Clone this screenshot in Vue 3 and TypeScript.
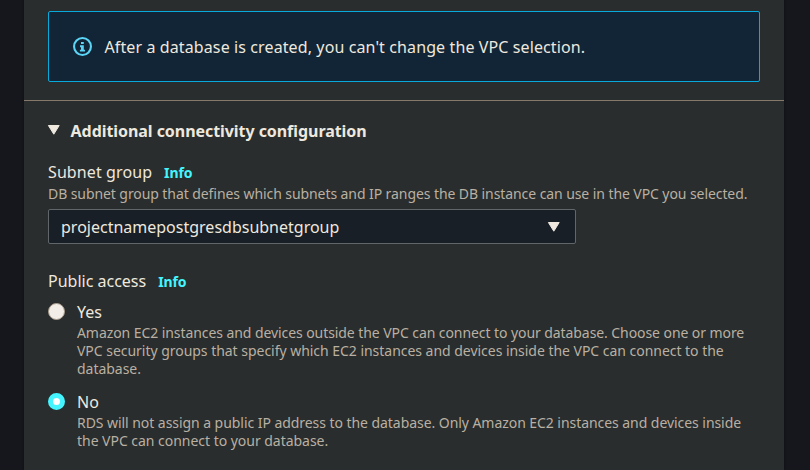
<script setup lang="ts">
import { ref } from 'vue'

interface AccessOption {
  value: string
  label: string
  lines: string[]
}

const access = ref('no')
const options: AccessOption[] = [
  {
    value: 'yes',
    label: 'Yes',
    lines: [
      'Amazon EC2 instances and devices outside the VPC can connect to your database. Choose one or more',
      'VPC security groups that specify which EC2 instances and devices inside the VPC can connect to the',
      'database.',
    ],
  },
  {
    value: 'no',
    label: 'No',
    lines: [
      'RDS will not assign a public IP address to the database. Only Amazon EC2 instances and devices inside',
      'the VPC can connect to your database.',
    ],
  },
]
</script>

<template>
  <main class="page">
    <div class="panel">
      <section class="notice-area">
        <div class="notice">
          <svg class="info-icon" width="19" height="19" viewBox="0 0 19 19">
            <circle cx="9.5" cy="9.5" r="8.45" fill="none" stroke="#5bd4f5" stroke-width="2.1" />
            <path d="M8 4.9h2.8V7H8zM7 8.3h3.8v4.4H12v1.9H6.9v-1.9H8v-2.5H7z" fill="#5bd4f5" />
          </svg>
          <span class="notice-text">After a database is created, you can't change the VPC selection.</span>
        </div>
      </section>
      <section class="config">
        <h2 class="heading">
          <svg class="caret" width="13" height="10" viewBox="0 0 13 10"><path d="M.4.5h10.8L5.8 9.2z" fill="#eee8df" stroke="#eee8df" stroke-linejoin="round" /></svg>
          <span class="heading-text">Additional connectivity configuration</span>
        </h2>
        <div class="label-row subnet-label"><span>Subnet group</span><a class="info">Info</a></div>
        <p class="desc subnet-desc">DB subnet group that defines which subnets and IP ranges the DB instance can use in the VPC you selected.</p>
        <div class="select">
          <span class="select-text">projectnamepostgresdbsubnetgroup</span>
          <svg class="caret" width="13" height="10" viewBox="0 0 13 10"><path d="M.4.5h10.8L5.8 9.2z" fill="#eee8df" stroke="#eee8df" stroke-linejoin="round" /></svg>
        </div>
        <div class="label-row public-label"><span>Public access</span><a class="info">Info</a></div>
        <div class="options">
          <div v-for="o in options" :key="o.value" class="option" :class="o.value" @click="access = o.value">
            <span class="radio" :class="{ checked: access === o.value }"></span>
            <div class="option-body">
              <div class="option-label">{{ o.label }}</div>
              <p v-for="line in o.lines" :key="line" class="desc">{{ line }}</p>
            </div>
          </div>
        </div>
      </section>
    </div>
  </main>
</template>

<style>
body {
  background: #16171c;
  overflow: hidden;
}
</style>

<style scoped>
.page {
  box-sizing: border-box;
  height: 470px;
  padding: 0 26px 0 24px;
  background: #16171c;
  font-family: 'Noto Sans', sans-serif;
  font-size: 16px;
  line-height: 22px;
  font-feature-settings: 'liga' 1;
  color: #eee8df;
  white-space: nowrap;
}
.panel {
  height: 470px;
  background: #292d2d;
  box-shadow: 0 0 2px #0b0d10;
}
.notice-area {
  box-sizing: border-box;
  height: 101px;
  padding: 11px 24px 0;
  border-bottom: 1px solid #87796a;
}
.notice {
  box-sizing: border-box;
  height: 71px;
  display: flex;
  align-items: center;
  padding: 0 24px;
  border: 1px solid #08aadc;
  border-radius: 2px;
  background: #112536;
}
.info-icon {
  margin-right: 12.5px;
}
.notice-text {
  letter-spacing: 0.11px;
}
.config {
  padding: 19px 24px 0;
}
.heading {
  display: flex;
  align-items: center;
  gap: 9.6px;
  margin: 0;
  font-size: 16px;
  line-height: 22px;
}
.heading .caret {
  margin-bottom: 2px;
}
.heading-text {
  letter-spacing: -0.06px;
}
.caret {
  flex: none;
  overflow: visible;
}
.label-row {
  display: flex;
  gap: 12px;
  height: 22px;
}
.subnet-label {
  margin-top: 19px;
  letter-spacing: 0.1px;
}
.info {
  font-size: 14px;
  font-weight: 700;
  line-height: 23px;
  letter-spacing: -0.1px;
  color: #44f5ff;
}
.public-label .info {
  line-height: 24px;
}
.desc {
  margin: 0;
  font-size: 14px;
  line-height: 18px;
  color: #b9b0a3;
}
.subnet-desc {
  margin-top: 2px;
  letter-spacing: -0.08px;
}
.select {
  box-sizing: border-box;
  width: 528px;
  height: 35px;
  margin-top: 6px;
  padding: 0 14px 0 12px;
  display: flex;
  align-items: center;
  justify-content: space-between;
  border: 1px solid #61666b;
  border-radius: 2px;
  background: #181f26;
}
.public-label {
  margin-top: 26px;
}
.options {
  display: grid;
  gap: 13px;
  margin-top: 9px;
}
.option {
  display: flex;
  gap: 12px;
}
.option-label {
  height: 23px;
}
.yes .desc {
  letter-spacing: -0.075px;
}
.yes .desc + .desc {
  letter-spacing: -0.03px;
}
.no .desc {
  letter-spacing: -0.055px;
}
.no .desc + .desc {
  letter-spacing: -0.03px;
}
.radio {
  box-sizing: border-box;
  flex: none;
  width: 17px;
  height: 17px;
  margin-top: 2px;
  border: 1px solid #a99d8e;
  border-radius: 50%;
  background: #f2ede6;
}
.radio.checked {
  border: 5px solid #44f5ff;
  background: #fff;
}
</style>
